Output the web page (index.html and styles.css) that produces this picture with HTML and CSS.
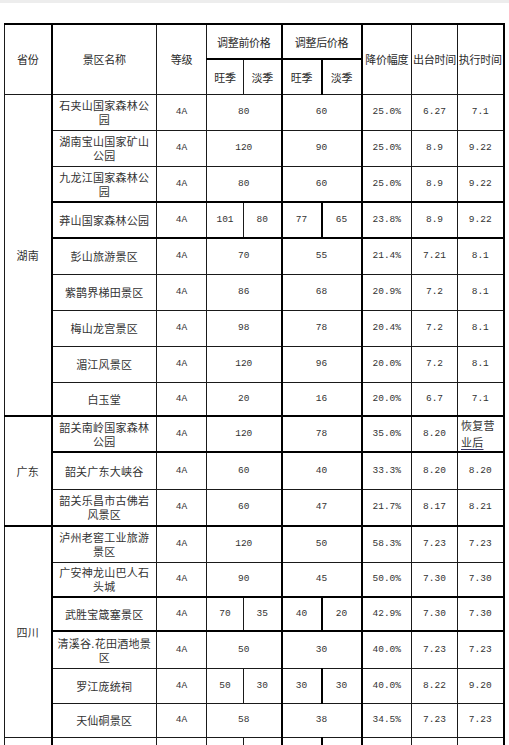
FILE: index.html
```html
<!DOCTYPE html>
<html lang="zh-CN">
<head>
<meta charset="utf-8">
<title>景区门票价格调整表</title>
<link rel="stylesheet" href="styles.css">
</head>
<body>
<div class="top-strip"></div>
<table class="price-table">
  <colgroup>
    <col class="c-prov"><col class="c-name"><col class="c-grade">
    <col class="c-p1"><col class="c-p2"><col class="c-p3"><col class="c-p4">
    <col class="c-drop"><col class="c-pub"><col class="c-exec">
  </colgroup>
  <thead>
    <tr class="h1">
      <th rowspan="2">省份</th>
      <th rowspan="2" class="bl2">景区名称</th>
      <th rowspan="2">等级</th>
      <th colspan="2">调整前价格</th>
      <th colspan="2" class="bl2">调整后价格</th>
      <th rowspan="2" class="bl2">降价幅度</th>
      <th rowspan="2">出台时间</th>
      <th rowspan="2" class="br2">执行时间</th>
    </tr>
    <tr class="h2">
      <th class="bt2">旺季</th>
      <th class="bt2">淡季</th>
      <th class="bt2 bl2">旺季</th>
      <th class="bt2 bl2">淡季</th>
    </tr>
  </thead>
  <tbody>
    <tr class="h36">
      <td rowspan="9" class="prov">湖南</td>
      <td class="name bl2">石夹山国家森林公园</td><td class="num">4A</td>
      <td colspan="2" class="num">80</td><td colspan="2" class="num bl2">60</td>
      <td class="num bl2">25.0%</td><td class="num">6.27</td><td class="num br2">7.1</td>
    </tr>
    <tr class="h36">
      <td class="name bl2">湖南宝山国家矿山公园</td><td class="num">4A</td>
      <td colspan="2" class="num">120</td><td colspan="2" class="num bl2">90</td>
      <td class="num bl2">25.0%</td><td class="num">8.9</td><td class="num br2">9.22</td>
    </tr>
    <tr class="h36">
      <td class="name bl2">九龙江国家森林公园</td><td class="num">4A</td>
      <td colspan="2" class="num">80</td><td colspan="2" class="num bl2">60</td>
      <td class="num bl2">25.0%</td><td class="num">8.9</td><td class="num br2">9.22</td>
    </tr>
    <tr class="tt h36">
      <td class="name bl2">莽山国家森林公园</td><td class="num">4A</td>
      <td class="num">101</td><td class="num">80</td><td class="num bl2">77</td><td class="num bl2">65</td>
      <td class="num bl2">23.8%</td><td class="num">8.9</td><td class="num br2">9.22</td>
    </tr>
    <tr class="tt h36">
      <td class="name bl2">彭山旅游景区</td><td class="num">4A</td>
      <td colspan="2" class="num">70</td><td colspan="2" class="num bl2">55</td>
      <td class="num bl2">21.4%</td><td class="num">7.21</td><td class="num br2">8.1</td>
    </tr>
    <tr class="h36">
      <td class="name bl2">紫鹊界梯田景区</td><td class="num">4A</td>
      <td colspan="2" class="num">86</td><td colspan="2" class="num bl2">68</td>
      <td class="num bl2">20.9%</td><td class="num">7.2</td><td class="num br2">8.1</td>
    </tr>
    <tr class="h36">
      <td class="name bl2">梅山龙宫景区</td><td class="num">4A</td>
      <td colspan="2" class="num">98</td><td colspan="2" class="num bl2">78</td>
      <td class="num bl2">20.4%</td><td class="num">7.2</td><td class="num br2">8.1</td>
    </tr>
    <tr class="h36">
      <td class="name bl2">湄江风景区</td><td class="num">4A</td>
      <td colspan="2" class="num">120</td><td colspan="2" class="num bl2">96</td>
      <td class="num bl2">20.0%</td><td class="num">7.2</td><td class="num br2">8.1</td>
    </tr>
    <tr class="h34">
      <td class="name bl2">白玉堂</td><td class="num">4A</td>
      <td colspan="2" class="num">20</td><td colspan="2" class="num bl2">16</td>
      <td class="num bl2">20.0%</td><td class="num">6.7</td><td class="num br2">7.1</td>
    </tr>

    <tr class="tt h36">
      <td rowspan="3" class="prov">广东</td>
      <td class="name bl2">韶关南岭国家森林公园</td><td class="num">4A</td>
      <td colspan="2" class="num">120</td><td colspan="2" class="num bl2">78</td>
      <td class="num bl2">35.0%</td><td class="num">8.20</td><td class="note br2">恢复营<span class="mark">业后</span></td>
    </tr>
    <tr class="tt h37">
      <td class="name bl2">韶关广东大峡谷</td><td class="num">4A</td>
      <td colspan="2" class="num">60</td><td colspan="2" class="num bl2">40</td>
      <td class="num bl2">33.3%</td><td class="num">8.20</td><td class="num br2">8.20</td>
    </tr>
    <tr class="h37">
      <td class="name bl2">韶关乐昌市古佛岩风景区</td><td class="num">4A</td>
      <td colspan="2" class="num">60</td><td colspan="2" class="num bl2">47</td>
      <td class="num bl2">21.7%</td><td class="num">8.17</td><td class="num br2">8.21</td>
    </tr>

    <tr class="tt h36">
      <td rowspan="6" class="prov">四川</td>
      <td class="name bl2">泸州老窖工业旅游景区</td><td class="num">4A</td>
      <td colspan="2" class="num">120</td><td colspan="2" class="num bl2">50</td>
      <td class="num bl2">58.3%</td><td class="num">7.23</td><td class="num br2">7.23</td>
    </tr>
    <tr class="h35">
      <td class="name bl2">广安神龙山巴人石头城</td><td class="num">4A</td>
      <td colspan="2" class="num">90</td><td colspan="2" class="num bl2">45</td>
      <td class="num bl2">50.0%</td><td class="num">7.30</td><td class="num br2">7.30</td>
    </tr>
    <tr class="tt h34">
      <td class="name bl2">武胜宝箴塞景区</td><td class="num">4A</td>
      <td class="num">70</td><td class="num">35</td><td class="num bl2">40</td><td class="num bl2">20</td>
      <td class="num bl2">42.9%</td><td class="num">7.30</td><td class="num br2">7.30</td>
    </tr>
    <tr class="tt h37">
      <td class="name bl2">清溪谷.花田酒地景区</td><td class="num">4A</td>
      <td colspan="2" class="num">50</td><td colspan="2" class="num bl2">30</td>
      <td class="num bl2">40.0%</td><td class="num">7.23</td><td class="num br2">7.23</td>
    </tr>
    <tr class="h35">
      <td class="name bl2">罗江庞统祠</td><td class="num">4A</td>
      <td class="num">50</td><td class="num">30</td><td class="num bl2">30</td><td class="num bl2">30</td>
      <td class="num bl2">40.0%</td><td class="num">8.22</td><td class="num br2">9.20</td>
    </tr>
    <tr class="h34">
      <td class="name bl2">天仙硐景区</td><td class="num">4A</td>
      <td colspan="2" class="num">58</td><td colspan="2" class="num bl2">38</td>
      <td class="num bl2">34.5%</td><td class="num">7.23</td><td class="num br2">7.23</td>
    </tr>
    <tr class="h36">
      <td class="prov"></td>
      <td class="name bl2"></td><td class="num"></td>
      <td class="num"></td><td class="num"></td><td class="num bl2"></td><td class="num bl2"></td>
      <td class="num bl2"></td><td class="num"></td><td class="num br2"></td>
    </tr>
  </tbody>
</table>
</body>
</html>
```

FILE: styles.css
```css
html, body {
  margin: 0;
  padding: 0;
  background: #ffffff;
}

.top-strip {
  height: 3px;
  background: #ededed;
}

.price-table {
  margin: 20px 0 0 4px;
  border-collapse: collapse;
  table-layout: fixed;
  width: 499px;
  font-family: "Noto Sans CJK SC", "Noto Sans", sans-serif;
  font-size: 11px;
  line-height: 14px;
  letter-spacing: 0.25px;
  color: #333333;
}

.c-prov { width: 47px; }
.c-name { width: 105px; }
.c-grade { width: 50px; }
.c-p1 { width: 37px; }
.c-p2 { width: 38px; }
.c-p3 { width: 40px; }
.c-p4 { width: 40px; }
.c-drop { width: 50px; }
.c-pub { width: 46px; }
.c-exec { width: 46px; }

.price-table th,
.price-table td {
  border: 1px solid #1a1a1a;
  text-align: center;
  vertical-align: middle;
  padding: 0;
  font-weight: normal;
  overflow: hidden;
}

.price-table th {
  color: #2b2b2b;
  letter-spacing: -0.3px;
  white-space: nowrap;
}

.price-table thead tr { height: 35px; }
.price-table thead tr.h1 th { border-top: 2px solid #000000; }

.price-table tbody tr.h34 { height: 34px; }
.price-table tbody tr.h35 { height: 35px; }
.price-table tbody tr.h36 { height: 36px; }
.price-table tbody tr.h37 { height: 37px; }

.price-table .bl2 { border-left: 2px solid #000000; }
.price-table .br2 { border-right: 2px solid #000000; }
.price-table .bt2 { border-top: 2px solid #000000; }
.price-table tr.tt > td { border-top: 2px solid #000000; }

.price-table .name {
  padding: 0 4px;
}

.price-table .num {
  font-family: "Liberation Mono", "DejaVu Sans Mono", monospace;
  font-size: 9.5px;
  letter-spacing: 0;
}

.price-table .note {
  text-align: left;
  padding: 0 3px;
  line-height: 17px;
}

.mark {
  text-decoration: underline;
  text-decoration-color: #3a3a6a;
  text-underline-offset: 2px;
}
```
